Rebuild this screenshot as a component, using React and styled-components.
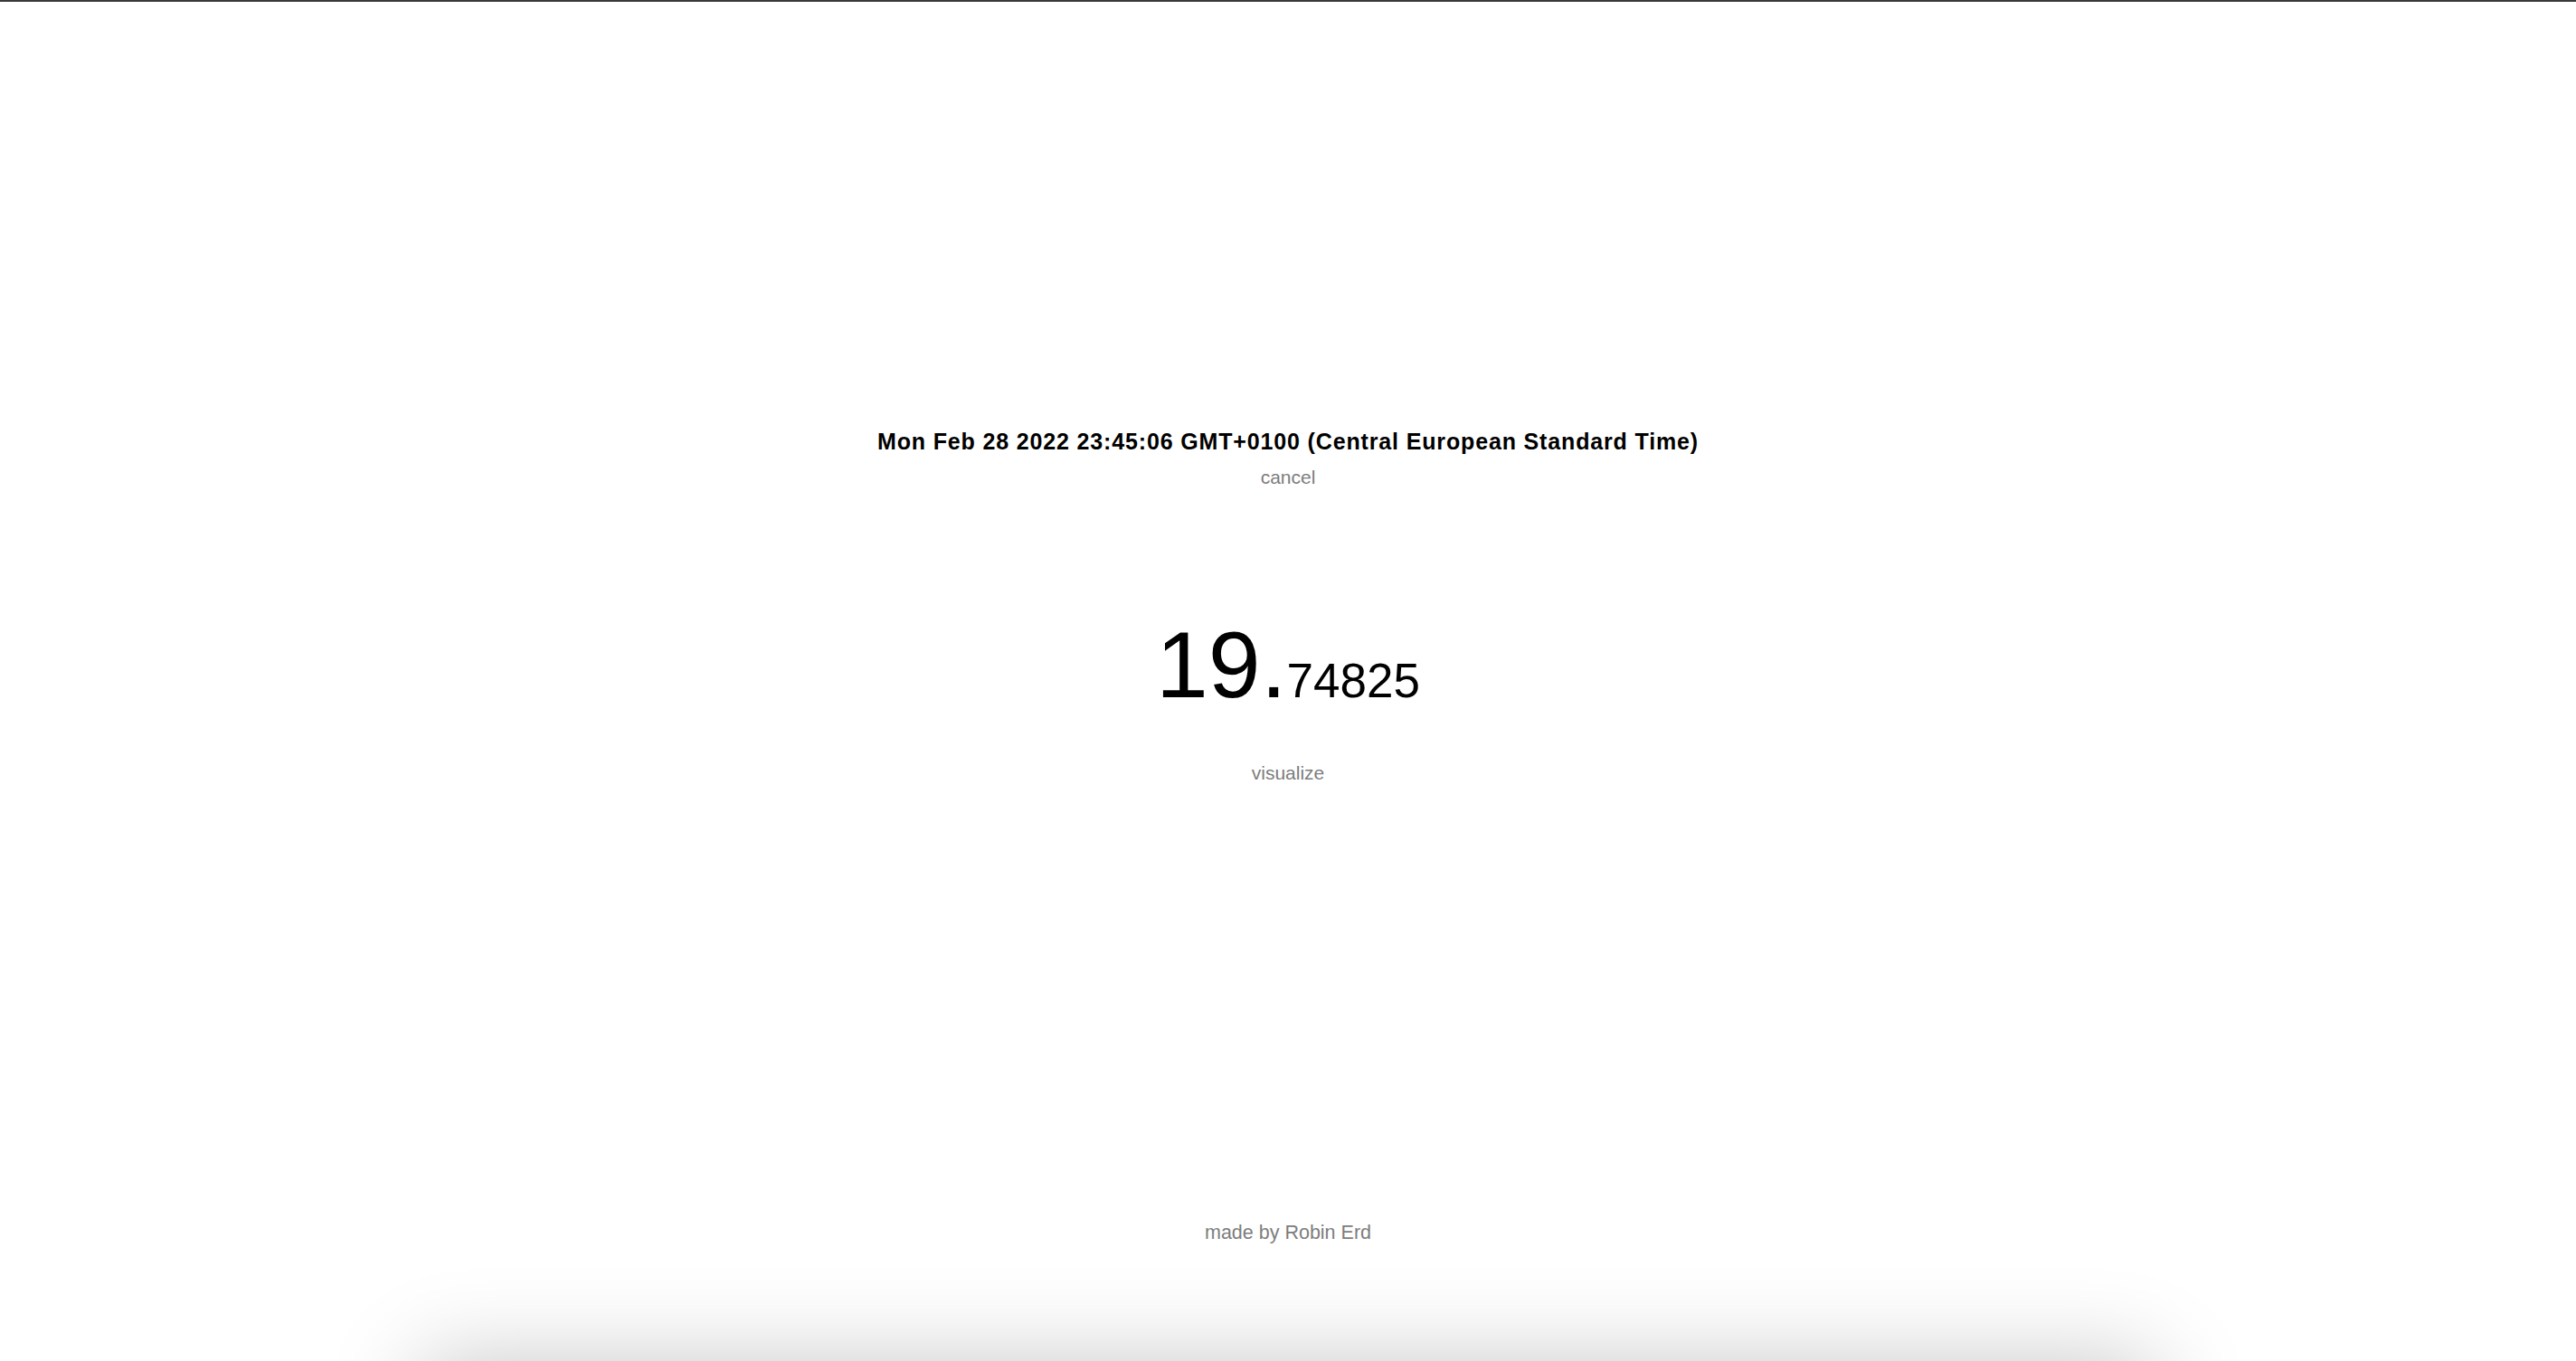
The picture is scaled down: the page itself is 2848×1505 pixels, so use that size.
import React from 'react'
import styled, { createGlobalStyle } from 'styled-components'

const GlobalStyle = createGlobalStyle`
  html, body {
    margin: 0;
    padding: 0;
    background: #ffffff;
    font-family: "Liberation Sans", Arial, Helvetica, sans-serif;
    color: #000;
  }
  body {
    border-top: 2px solid #3a3a3a;
  }
`

const Screen = styled.main`
  height: 1503px;
  display: flex;
  flex-direction: column;
  align-items: center;
  padding-top: 473px;
  box-sizing: border-box;
  overflow: hidden;
`

const DateLine = styled.h1`
  margin: 0;
  font-size: 25px;
  font-weight: 700;
  letter-spacing: 0.85px;
  line-height: 27px;
`

const TextButton = styled.button`
  background: none;
  border: none;
  padding: 0;
  font-family: inherit;
  font-size: 21px;
  line-height: 24px;
  color: #7d7d7d;
  cursor: pointer;
  margin-top: ${p => p.gap || 0}px;
`

const Number = styled.div`
  margin-top: 136px;
  display: flex;
  align-items: baseline;
  line-height: 1.15;
`

const Whole = styled.span`
  font-size: 104px;
`

const Fraction = styled.span`
  font-size: 53px;
`

const Footer = styled.footer`
  margin-top: auto;
  margin-bottom: 130px;
  font-size: 21.5px;
  line-height: 24px;
  color: #7d7d7d;
`

const Visual = styled.section`
  width: 1920px;
  height: 900px;
  margin: 0 auto;
  background: #fff;
  box-shadow: 0 0 95px rgba(0, 0, 0, 0.22);
`

export default function App() {
  const value = '19.74825'
  const [whole, fraction] = value.split('.')
  return (
    <>
      <GlobalStyle />
      <Screen>
        <DateLine>Mon Feb 28 2022 23:45:06 GMT+0100 (Central European Standard Time)</DateLine>
        <TextButton gap={14}>cancel</TextButton>
        <Number>
          <Whole>{whole}.</Whole>
          <Fraction>{fraction}</Fraction>
        </Number>
        <TextButton gap={47}>visualize</TextButton>
        <Footer>made by Robin Erd</Footer>
      </Screen>
      <Visual />
    </>
  )
}
